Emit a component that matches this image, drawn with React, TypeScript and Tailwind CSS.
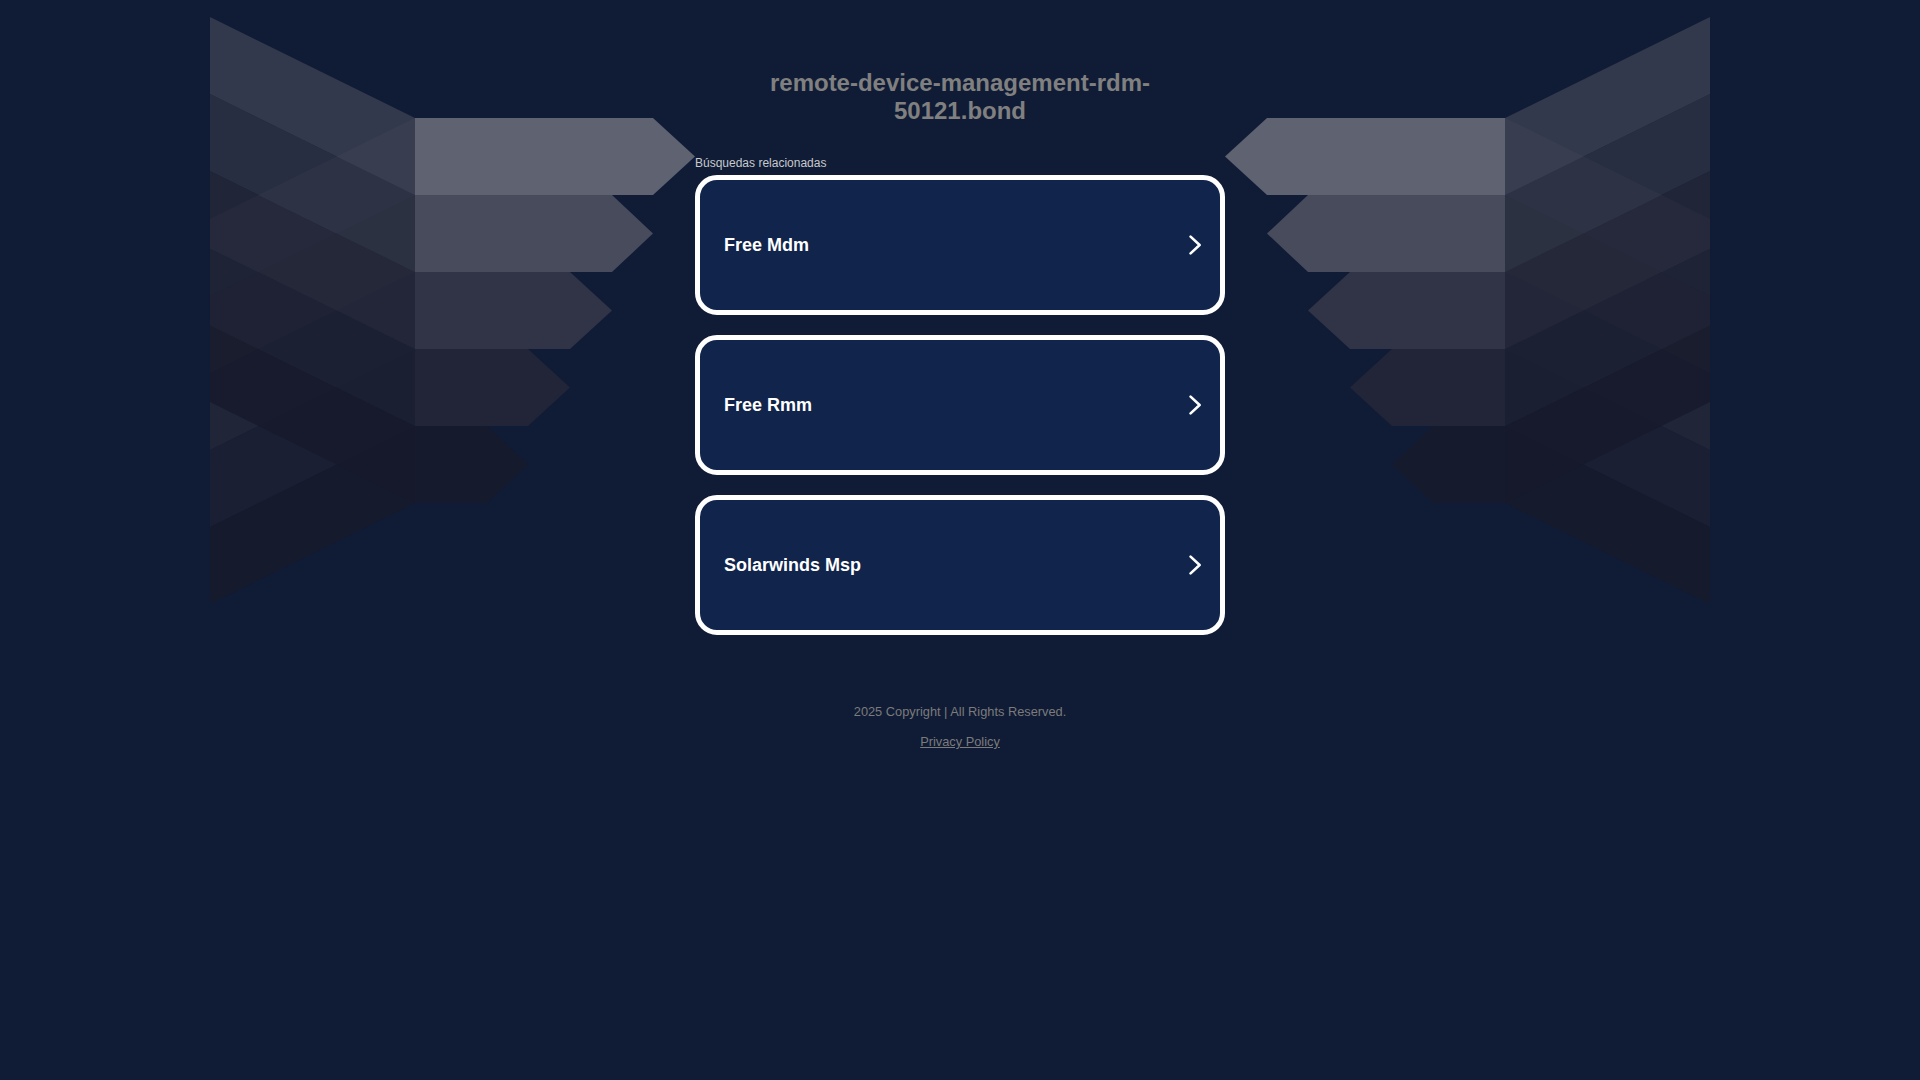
import React from "react";

const ROWS = [
  { c: "#5f6270", f: "#3a3e50", e: 443, t: 485 },
  { c: "#484b5b", f: "#2d3143", e: 402, t: 443 },
  { c: "#303446", f: "#232738", e: 360, t: 402 },
  { c: "#212537", f: "#1c2033", e: 318, t: 360 },
  { c: "#161a2d", f: "#161a2c", e: 277, t: 318 },
];

function Wing({ flip = false }: { flip?: boolean }) {
  const H = 77;
  const S = 205;
  const D = 101;
  const order = [4, 3, 2, 1, 0];
  return (
    <svg width="485" height="590" viewBox="0 0 485 590" className="shrink-0 block">
      <g transform={flip ? "translate(485,0) scale(-1,1)" : undefined}>
        {order.map((i) => {
          const r = ROWS[i];
          const top = 101 + H * i;
          const bot = top + H;
          return (
            <polygon
              key={"d" + i}
              points={`0,${top + D} ${S},${top} ${S},${bot} 0,${bot + D}`}
              fill={r.f}
              fillOpacity={0.85}
            />
          );
        })}
        {order.map((i) => {
          const r = ROWS[i];
          const top = 101 + H * i;
          const bot = top + H;
          return (
            <polygon
              key={"u" + i}
              points={`0,${top - D} ${S},${top} ${S},${bot} 0,${bot - D}`}
              fill={r.f}
              fillOpacity={0.85}
            />
          );
        })}
        {ROWS.map((r, i) => {
          const top = 101 + H * i;
          const bot = top + H;
          const mid = top + H / 2;
          return (
            <polygon
              key={"r" + i}
              points={`${S},${top} ${r.e},${top} ${r.t},${mid} ${r.e},${bot} ${S},${bot}`}
              fill={r.c}
            />
          );
        })}
      </g>
    </svg>
  );
}

function Chevron() {
  return (
    <svg width="13" height="20" viewBox="0 0 13 20" className="block shrink-0">
      <polyline
        points="1.6,1.6 10.6,10 1.6,18.4"
        fill="none"
        stroke="#ffffff"
        strokeWidth="2.6"
        strokeLinecap="round"
        strokeLinejoin="round"
      />
    </svg>
  );
}

const ITEMS = ["Free Mdm", "Free Rmm", "Solarwinds Msp"];

export default function App() {
  return (
    <div className="min-h-screen w-full bg-[#101c36] font-['Liberation_Sans',Arial,sans-serif]">
      <div className="flex justify-center pt-[17px]">
        <Wing />
        <main className="w-[530px] shrink-0 pt-[52px]">
          <h1 className="mx-auto w-[480px] text-center text-[24px] font-bold leading-[27.6px] text-[#808080]">
            remote-device-management-rdm-50121.bond
          </h1>
          <p className="mt-[32px] text-[12px] leading-[14px] text-[#c8c9cd]">Búsquedas relacionadas</p>
          <div className="mt-[5px] flex flex-col gap-[20px]">
            {ITEMS.map((t) => (
              <a
                key={t}
                href="#"
                className="flex h-[140px] items-center justify-between rounded-[22px] border-[5px] border-white bg-[#11244b] pl-[24px] pr-[18px]"
              >
                <span className="text-[18px] font-bold leading-[21px] text-white">{t}</span>
                <Chevron />
              </a>
            ))}
          </div>
          <footer className="mt-[69px] text-center text-[12.8px] leading-[15px] text-[#7b7b7b]">
            <p>2025 Copyright | All Rights Reserved.</p>
            <p className="mt-[15px]">
              <a href="#" className="underline">
                Privacy Policy
              </a>
            </p>
          </footer>
        </main>
        <Wing flip />
      </div>
    </div>
  );
}
